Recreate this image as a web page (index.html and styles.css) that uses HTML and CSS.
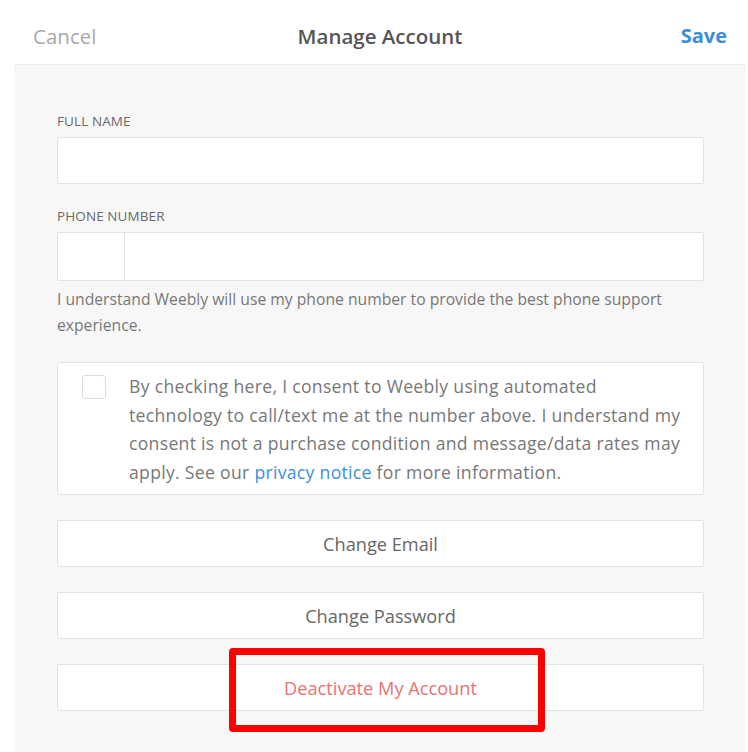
FILE: index.html
```html
<!DOCTYPE html>
<html lang="en">
<head>
  <meta charset="UTF-8">
  <meta name="viewport" content="width=device-width, initial-scale=1.0">
  <title>Manage Account</title>
  <link rel="stylesheet" href="styles.css">
</head>
<body>
  <header class="topbar">
    <a class="topbar-cancel">Cancel</a>
    <h1 class="topbar-title">Manage Account</h1>
    <a class="topbar-save">Save</a>
  </header>

  <main class="panel">
    <label class="field-label" for="fullName">FULL NAME</label>
    <input class="field-input" type="text" id="fullName">

    <label class="field-label" for="phone">PHONE NUMBER</label>
    <div class="phone-input">
      <div class="phone-code"></div>
      <input class="phone-number" type="tel" id="phone">
    </div>
    <p class="help-text">I understand Weebly will use my phone number to provide the best phone support experience.</p>

    <div class="consent">
      <span class="checkbox"></span>
      <p class="consent-text">By checking here, I consent to Weebly using automated technology to call/text me at the number above. I understand my consent is not a purchase condition and message/data rates may apply. See our <a class="link">privacy notice</a> for more information.</p>
    </div>

    <button class="action">Change Email</button>
    <button class="action">Change Password</button>
    <div class="danger-row">
      <button class="action danger">Deactivate My Account</button>
      <div class="highlight"></div>
    </div>
  </main>
</body>
</html>
```

FILE: styles.css
```css
body {
  font-family: 'Open Sans', 'Lato', sans-serif;
  margin: 0;
  padding: 0;
  background: #fff;
  height: 100vh;
  display: flex;
  flex-direction: column;
  overflow: hidden;
}

.topbar {
  display: grid;
  grid-template-columns: 1fr auto 1fr;
  align-items: center;
  box-sizing: border-box;
  height: 64px;
  padding: 7px 21px 0 33px;
}

.topbar-cancel {
  font-size: 20.5px;
  color: #aaa;
}

.topbar-title {
  margin: 0;
  font-size: 20.5px;
  font-weight: 600;
  color: #555;
}

.topbar-save {
  justify-self: end;
  font-size: 20px;
  font-weight: 700;
  color: #3a8fdc;
}

.panel {
  flex: 1;
  display: flex;
  flex-direction: column;
  margin: 0 2px 0 14px;
  padding: 48px 42px 0 43px;
  background: #f7f7f7;
  border-top: 1px solid #ececec;
}

.field-label {
  font-size: 13.5px;
  line-height: 16px;
  letter-spacing: 0.1px;
  color: #6a6a6a;
  margin-bottom: 8px;
}

.field-input {
  height: 47px;
  box-sizing: border-box;
  border: 1.5px solid #e3e3e3;
  border-radius: 2px;
  background: #fff;
  margin: 0 0 24px;
}

.phone-input {
  display: flex;
  height: 49px;
  box-sizing: border-box;
  border: 1.5px solid #e3e3e3;
  border-radius: 2px;
  background: #fff;
}

.phone-code {
  width: 66px;
  border-right: 1.5px solid #e3e3e3;
}

.phone-number {
  flex: 1;
  border: none;
  background: transparent;
}

.help-text {
  margin: 5px 0 24px;
  font-size: 15.7px;
  line-height: 26px;
  color: #777;
  padding-right: 20px;
}

.consent {
  display: flex;
  align-items: flex-start;
  box-sizing: border-box;
  height: 133px;
  padding: 9px 16px 9px 24px;
  border: 1.5px solid #e3e3e3;
  border-radius: 2px;
  background: #fff;
  margin-bottom: 25px;
}

.checkbox {
  flex: none;
  width: 22px;
  height: 22px;
  margin-top: 3px;
  border: 1.5px solid #dcdcdc;
  border-radius: 3px;
  background: #fff;
}

.consent-text {
  max-width: 552px;
  margin: 0 0 0 23px;
  font-size: 17.6px;
  line-height: 28.7px;
  letter-spacing: 0.3px;
  color: #777;
}

.link {
  color: #3a8fdc;
}

.action {
  height: 47px;
  margin: 0 0 25px;
  border: 1.5px solid #e3e3e3;
  border-radius: 2px;
  background: #fff;
  font-family: inherit;
  font-size: 18.2px;
  color: #666;
}

.danger-row {
  position: relative;
  display: flex;
  flex-direction: column;
}

.danger {
  color: #e77272;
}

/* annotation box drawn over the button */
.highlight {
  position: absolute;
  left: 172px;
  top: -16px;
  width: 316px;
  height: 84px;
  box-sizing: border-box;
  border: 7px solid #ff0000;
  border-radius: 4px;
}
```
